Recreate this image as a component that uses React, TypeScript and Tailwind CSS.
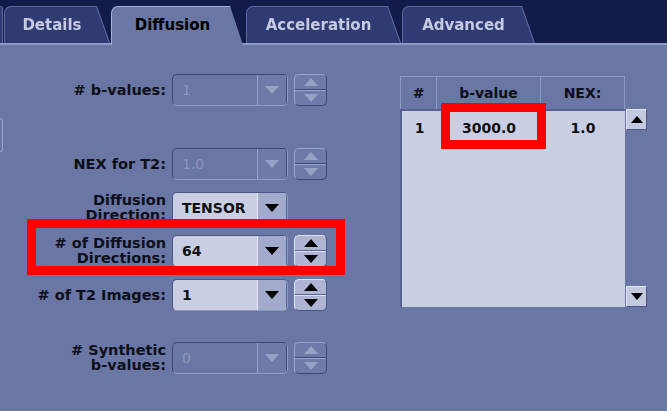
import clsx from 'clsx';

type Row = {
  label: string[];
  value: string;
  disabled?: boolean;
  spinner?: boolean;
  mt: string;
};

const rows: Row[] = [
  { label: ['# b-values:'], value: '1', disabled: true, spinner: true, mt: 'mt-[29px]' },
  { label: ['NEX for T2:'], value: '1.0', disabled: true, spinner: true, mt: 'mt-[42px]' },
  { label: ['Diffusion', 'Direction:'], value: 'TENSOR', mt: 'mt-[12px]' },
  { label: ['# of Diffusion', 'Directions:'], value: '64', spinner: true, mt: 'mt-[11px]' },
  { label: ['# of T2 Images:'], value: '1', spinner: true, mt: 'mt-[12px]' },
  { label: ['# Synthetic', 'b-values:'], value: '0', disabled: true, spinner: true, mt: 'mt-[31px]' },
];

const tabs = [
  { name: 'Details', w: 'w-[105px]', ml: 'ml-[1px]' },
  { name: 'Diffusion', w: 'w-[132px]', ml: 'ml-[2px]', active: true },
  { name: 'Acceleration', w: 'w-[154px]', ml: 'ml-[3px]' },
  { name: 'Advanced', w: 'w-[132px]', ml: 'ml-[2px]' },
];

const Tri = ({ up, color }: { up?: boolean; color: string }) => (
  <svg width="14" height="8" viewBox="0 0 14 8">
    <path d={up ? 'M0 8 L7 0 L14 8 Z' : 'M0 0 L14 0 L7 8 Z'} fill={color} />
  </svg>
);

const Dropdown = ({ value, disabled }: { value: string; disabled?: boolean }) => (
  <div
    className={clsx(
      'flex h-[32px] w-[116px] overflow-hidden rounded-[5px] border',
      disabled
        ? 'border-t-[#3d4777] border-l-[#3d4777] border-b-[#929dc7] border-r-[#929dc7] bg-[#6a76a3]'
        : 'border-t-[#4b5686] border-l-[#4b5686] border-b-[#8c97c2] border-r-[#8c97c2] bg-[#c9cee2]',
    )}
  >
    <div
      className={clsx(
        'flex flex-1 items-center pl-[9px] text-[14px] font-bold',
        disabled ? 'font-normal text-[#8e98bf]' : 'text-[#111]',
      )}
    >
      {value}
    </div>
    <div
      className={clsx(
        'flex w-[30px] items-center justify-center border-l border-r',
        disabled
          ? 'border-l-[#96a1ca] border-r-[#3d4777] bg-[#6e7aa7]'
          : 'border-l-[#e3e6f1] border-r-[#59649a] bg-[#a3abcc]',
      )}
    >
      <Tri color={disabled ? '#98a1c6' : '#000'} />
    </div>
  </div>
);

const Spinner = ({ disabled }: { disabled?: boolean }) => (
  <div
    className={clsx(
      'ml-[6px] flex h-[32px] w-[33px] flex-col overflow-hidden rounded-[5px] border',
      disabled
        ? 'border-t-[#9aa4cc] border-l-[#9aa4cc] border-b-[#3d4777] border-r-[#3d4777] bg-[#6e7aa7]'
        : 'border-t-[#dde1ef] border-l-[#dde1ef] border-b-[#4b5686] border-r-[#4b5686] bg-[#aeb5d3]',
    )}
  >
    <div
      className={clsx(
        'flex flex-1 items-center justify-center border-b',
        disabled ? 'border-b-[#3d4777]' : 'border-b-[#59649a]',
      )}
    >
      <Tri up color={disabled ? '#98a1c6' : '#000'} />
    </div>
    <div
      className={clsx(
        'flex flex-1 items-center justify-center border-t',
        disabled ? 'border-t-[#9aa4cc]' : 'border-t-[#dde1ef]',
      )}
    >
      <Tri color={disabled ? '#98a1c6' : '#000'} />
    </div>
  </div>
);

const ScrollBtn = ({ up }: { up?: boolean }) => (
  <div className="flex h-[21px] w-[21px] items-center justify-center border border-t-[#e4e7f2] border-l-[#e4e7f2] border-b-[#4b5686] border-r-[#4b5686] bg-[#c3c9df]">
    <svg width="12" height="7" viewBox="0 0 12 7">
      <path d={up ? 'M0 7 L6 0 L12 7 Z' : 'M0 0 L12 0 L6 7 Z'} fill="#000" />
    </svg>
  </div>
);

export default function App() {
  return (
    <div className="relative h-[411px] w-[667px] overflow-hidden bg-[#6a76a3] font-['DejaVu_Sans',sans-serif] select-none">
      {/* tab strip */}
      <div className="flex h-[45px] items-end border-b-2 border-[#8e9ac6] bg-[#121b4a]">
        <div className="h-[37px] w-[3px] rounded-tr-[3px] border-t border-r border-[#5b679b] bg-[#2f3b72]" />
        {tabs.map((t) => (
          <div
            key={t.name}
            className={clsx(
              t.ml,
              t.active ? 'relative -mb-[2px]' : '[filter:drop-shadow(1px_0_0_#6571a6)]',
            )}
          >
            <div
              className={clsx(
                t.w,
                'flex items-center rounded-t-[7px] border-t border-l pr-[14px] pl-[4px] [clip-path:polygon(0_0,calc(100%-13px)_0,100%_100%,0_100%)]',
                t.active
                  ? 'h-[39px] border-[#a9b3da] bg-[#6a76a3] pb-[2px] text-[#000]'
                  : 'h-[37px] border-[#5d699c] bg-[#2f3b72] text-[#c6cbe2]',
              )}
            >
              <span className="w-full text-center text-[15px] font-bold">{t.name}</span>
            </div>
          </div>
        ))}
      </div>

      <div className="flex">
        {/* cut-off control at left edge */}
        <div className="mt-[73px] h-[34px] w-[3px] rounded-r-[4px] border-y border-r border-[#9aa4cc]" />

        {/* form */}
        <div className="flex w-[340px] flex-col">
          {rows.map((r) => (
            <div key={r.label.join(' ')} className={clsx('flex items-center', r.mt)}>
              <div className="w-[163px] text-right text-[14.5px] leading-[15px] font-bold text-[#0d0f1a]">
                {r.label.map((l) => (
                  <div key={l}>{l}</div>
                ))}
              </div>
              <div className="ml-[6px]">
                <Dropdown value={r.value} disabled={r.disabled} />
              </div>
              {r.spinner && <Spinner disabled={r.disabled} />}
            </div>
          ))}
        </div>

        {/* b-value table */}
        <div className="mt-[31px] ml-[57px] flex">
          <div className="flex w-[225px] flex-col">
            <div className="flex h-[33px] border-t border-[#8f9ac4] text-[14px] font-bold text-[#0d0f1a]">
              <div className="flex w-[37px] items-center justify-center border-l border-r border-[#8f9ac4]">#</div>
              <div className="flex w-[104px] items-center justify-center border-r border-[#8f9ac4]">b-value</div>
              <div className="flex flex-1 items-center justify-center border-r border-[#8f9ac4]">NEX:</div>
            </div>
            <div className="h-[198px] border-t-2 border-l-2 border-[#56618f] bg-[#c9cee2] text-[14px] font-bold text-[#111]">
              <div className="flex h-[34px] items-center">
                <div className="w-[35px] text-center">1</div>
                <div className="w-[104px] text-center">3000.0</div>
                <div className="flex-1 text-center">1.0</div>
              </div>
            </div>
          </div>
          <div className="mt-[33px] ml-[1px] flex h-[198px] flex-col justify-between">
            <ScrollBtn up />
            <ScrollBtn />
          </div>
        </div>
      </div>

      {/* red highlight boxes */}
      <div className="absolute top-[219px] left-[27px] h-[56px] w-[318px] border-[9px] border-[#ff0000]" />
      <div className="absolute top-[103px] left-[441px] h-[46px] w-[105px] border-[9px] border-[#ff0000]" />
    </div>
  );
}
